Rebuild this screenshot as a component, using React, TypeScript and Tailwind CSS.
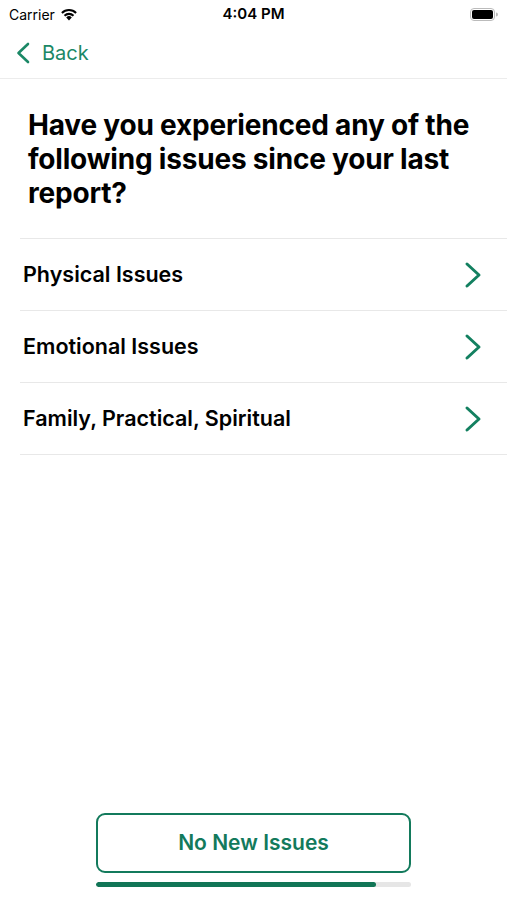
const items = ["Physical Issues", "Emotional Issues", "Family, Practical, Spiritual"];

const StatusBar = () => (
  <div className="h-[28px] flex items-center justify-between px-[9px] text-black">
    <div className="flex items-center gap-[5px] w-[120px]">
      <span className="text-[14px]">Carrier</span>
      <svg width="18" height="13" viewBox="0 0 18 13">
        <path d="M9 12.5 L6.2 9.4 A4 4 0 0 1 11.8 9.4 Z" fill="#000" />
        <path d="M3.8 6.9 A7.5 7.5 0 0 1 14.2 6.9 L12.8 8.4 A5.5 5.5 0 0 0 5.2 8.4 Z" fill="#000" />
        <path d="M1.2 4.2 A11 11 0 0 1 16.8 4.2 L15.4 5.7 A9 9 0 0 0 2.6 5.7 Z" fill="#000" />
      </svg>
    </div>
    <span className="text-[15px] font-semibold">4:04 PM</span>
    <div className="w-[120px] flex justify-end">
      <svg width="28" height="13" viewBox="0 0 28 13">
        <rect x="0.5" y="0.5" width="24" height="12" rx="3.5" fill="none" stroke="#bbb" />
        <rect x="2" y="2" width="21" height="9" rx="2" fill="#000" />
        <path d="M26 4.5 a1.8 1.8 0 0 1 0 4 Z" fill="#bbb" />
      </svg>
    </div>
  </div>
);

const RowChevron = () => (
  <svg width="18" height="28" viewBox="0 0 18 28" fill="none">
    <path d="M3 3 L15 14 L3 25" stroke="currentColor" strokeWidth="3" strokeLinecap="round" strokeLinejoin="round" />
  </svg>
);

const BackChevron = () => (
  <svg width="14" height="22" viewBox="0 0 14 22" fill="none">
    <path d="M12 2 L2.5 11 L12 20" stroke="currentColor" strokeWidth="2.6" strokeLinecap="round" strokeLinejoin="round" />
  </svg>
);

export default function App() {
  return (
    <div className="w-[507px] h-[900px] bg-white flex flex-col" style={{ fontFamily: "Inter, 'Noto Sans', sans-serif" }}>
      <StatusBar />
      <div className="h-[51px] flex items-center pl-[16px] border-b border-[#ececec] text-[#1b8866]">
        <BackChevron />
        <span className="text-[20px] ml-[12px]">Back</span>
      </div>
      <h1 className="px-[28px] pt-[29px] pb-[28px] text-[28px] font-bold leading-[34px] text-black tracking-[-0.2px]">
        Have you experienced any of the following issues since your last report?
      </h1>
      <div className="ml-[20px] border-t border-[#e8e8e8]">
        {items.map((t) => (
          <div key={t} className="h-[72px] flex items-center justify-between pl-[3px] pr-[25px] border-b border-[#e8e8e8]">
            <span className="text-[21.5px] font-semibold text-black">{t}</span>
            <span className="text-[#138060]">
              <RowChevron />
            </span>
          </div>
        ))}
      </div>
      <div className="flex-1" />
      <div className="px-[96px] pb-[13px]">
        <button className="w-full h-[60px] border-2 border-[#137a5c] rounded-[9px] text-[21px] font-semibold text-[#137a5c]">
          No New Issues
        </button>
        <div className="mt-[9px] h-[5px] rounded-full bg-[#e6e6e6] overflow-hidden">
          <div className="h-full bg-[#117556] rounded-full" style={{ width: "89%" }} />
        </div>
      </div>
    </div>
  );
}
